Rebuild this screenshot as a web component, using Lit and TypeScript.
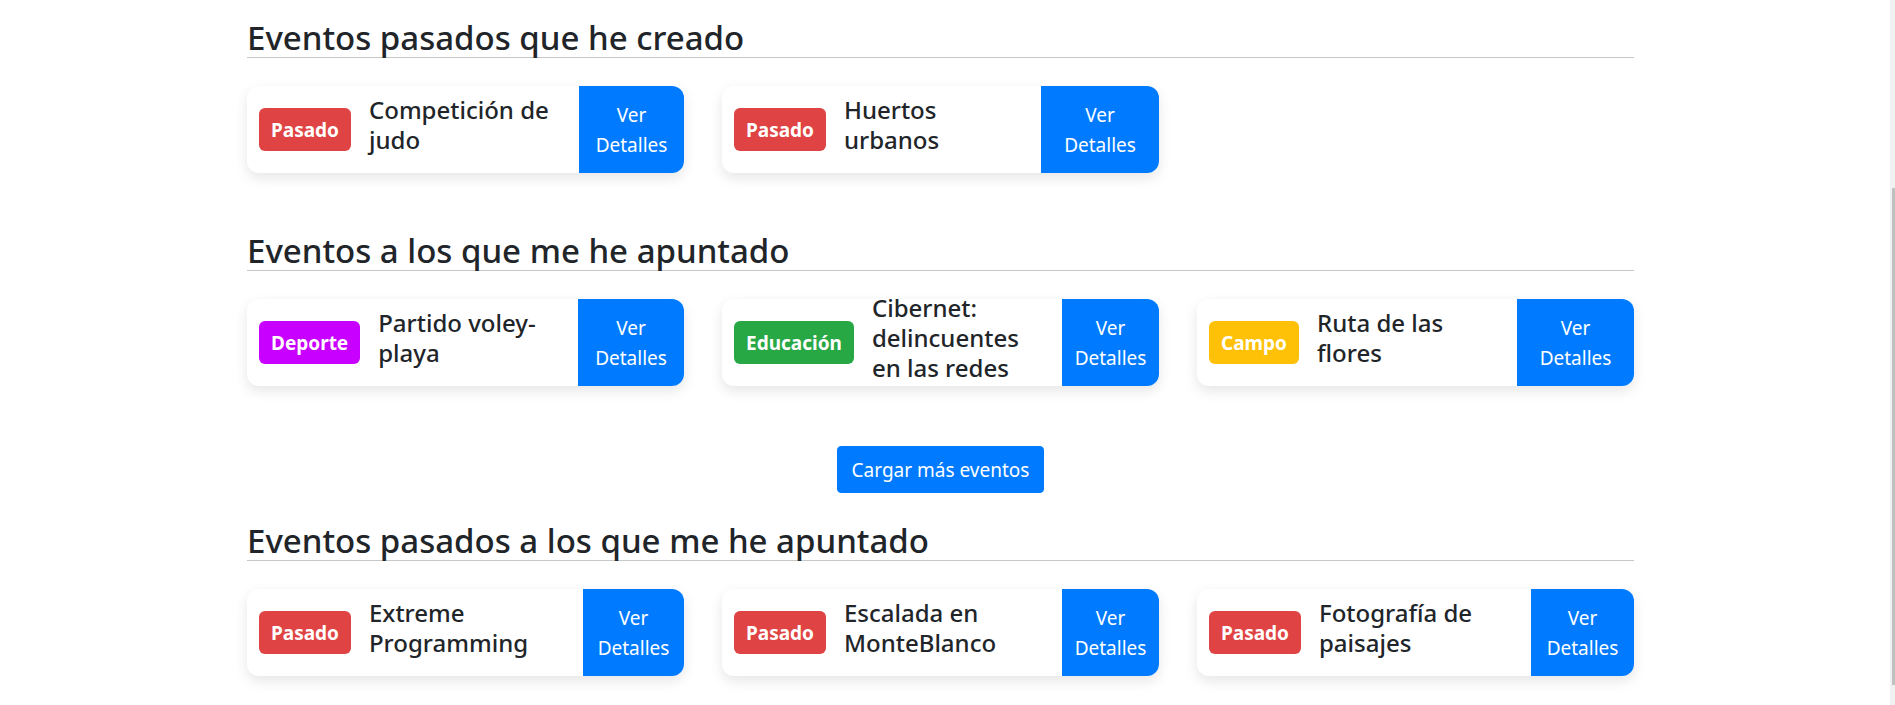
import { LitElement, html, css, nothing } from "lit";
import { customElement, property } from "lit/decorators.js";

interface EventItem {
  kind: string;
  tone: "past" | "sport" | "education" | "country";
  title: string;
  actionWidth: number;
}

interface EventSection {
  heading: string;
  items: EventItem[];
  more?: boolean;
}

const SECTIONS: EventSection[] = [
  {
    heading: "Eventos pasados que he creado",
    items: [
      { kind: "Pasado", tone: "past", title: "Competición de judo", actionWidth: 105 },
      { kind: "Pasado", tone: "past", title: "Huertos urbanos", actionWidth: 118 },
    ],
  },
  {
    heading: "Eventos a los que me he apuntado",
    more: true,
    items: [
      { kind: "Deporte", tone: "sport", title: "Partido voley-playa", actionWidth: 106 },
      { kind: "Educación", tone: "education", title: "Cibernet: delincuentes en las redes", actionWidth: 97 },
      { kind: "Campo", tone: "country", title: "Ruta de las flores", actionWidth: 117 },
    ],
  },
  {
    heading: "Eventos pasados a los que me he apuntado",
    items: [
      { kind: "Pasado", tone: "past", title: "Extreme Programming", actionWidth: 101 },
      { kind: "Pasado", tone: "past", title: "Escalada en MonteBlanco", actionWidth: 97 },
      { kind: "Pasado", tone: "past", title: "Fotografía de paisajes", actionWidth: 103 },
    ],
  },
];

@customElement("event-card")
export class EventCard extends LitElement {
  @property({ attribute: false }) item!: EventItem;

  static styles = css`
    :host {
      display: block;
      min-width: 0;
    }
    .card {
      display: flex;
      align-items: center;
      height: 87px;
      padding-left: 12px;
      border-radius: 12px;
      background: #fff;
      box-shadow: 0 5px 13px rgba(0, 0, 0, 0.1);
      overflow: hidden;
    }
    .badge {
      flex: none;
      padding: 8px 12px 6px;
      border-radius: 6px;
      color: #fff;
      font-size: 19px;
      font-weight: 700;
      line-height: 29px;
    }
    .past { background: #e04343; }
    .sport { background: #c800ff; }
    .education { background: #28a745; }
    .country { background: #ffc107; }
    .title {
      flex: 1;
      min-width: 0;
      margin: 0 18px 10px;
      font-size: 24px;
      font-weight: 500;
      line-height: 30px;
    }
    .action {
      flex: none;
      display: flex;
      align-items: center;
      align-self: stretch;
      box-sizing: border-box;
      padding: 0 12px;
      background: #007bff;
      color: #fff;
      font-size: 19px;
      line-height: 30px;
      text-align: center;
      text-decoration: none;
      justify-content: center;
    }
    .label {
      width: min-content;
    }
  `;

  render() {
    const { kind, tone, title, actionWidth } = this.item;
    return html`
      <article class="card">
        <span class="badge ${tone}">${kind}</span>
        <h3 class="title">${title}</h3>
        <a class="action" href="#" style="width:${actionWidth}px"><span class="label">Ver Detalles</span></a>
      </article>
    `;
  }
}

@customElement("app-root")
export class AppRoot extends LitElement {
  static styles = css`
    :host {
      display: block;
      background: #fff;
      color: #212529;
      font-family: "Segoe UI", "Noto Sans", "Open Sans", sans-serif;
    }
    .page {
      display: flex;
      align-items: stretch;
      min-height: 100vh;
    }
    .content {
      flex: 1;
      min-width: 0;
      padding: 18px 9px 28px 0;
    }
    .container {
      max-width: 1387px;
      margin: 0 auto;
    }
    .heading {
      margin: 0 0 28px;
      border-bottom: 1px solid #c8c8c8;
      font-size: 33px;
      font-weight: 500;
      line-height: 39px;
    }
    .grid {
      display: grid;
      grid-template-columns: repeat(3, minmax(0, 1fr));
      gap: 38px;
    }
    .section + .section {
      margin-top: 58px;
    }
    .section.more + .section {
      margin-top: 28px;
    }
    .footer {
      display: flex;
      justify-content: center;
      margin-top: 60px;
    }
    .load {
      padding: 9px 14px 7px;
      border: 1px solid #007bff;
      border-radius: 4px;
      background: #007bff;
      color: #fff;
      font: inherit;
      font-size: 19px;
      line-height: 29px;
    }
    .track {
      flex: none;
      display: flex;
      box-sizing: border-box;
      width: 5px;
      padding: 188px 0 20px 2px;
      background: #f1f1f1;
    }
    .thumb {
      flex: 1;
      background: #c1c1c1;
    }
  `;

  render() {
    return html`
      <div class="page">
        <main class="content">
          <div class="container">
            ${SECTIONS.map(
              (s) => html`
                <section class="section ${s.more ? "more" : ""}">
                  <h2 class="heading">${s.heading}</h2>
                  <div class="grid">
                    ${s.items.map((i) => html`<event-card .item=${i}></event-card>`)}
                  </div>
                  ${s.more
                    ? html`<div class="footer"><button class="load" type="button">Cargar más eventos</button></div>`
                    : nothing}
                </section>
              `
            )}
          </div>
        </main>
        <div class="track" aria-hidden="true"><div class="thumb"></div></div>
      </div>
    `;
  }
}
